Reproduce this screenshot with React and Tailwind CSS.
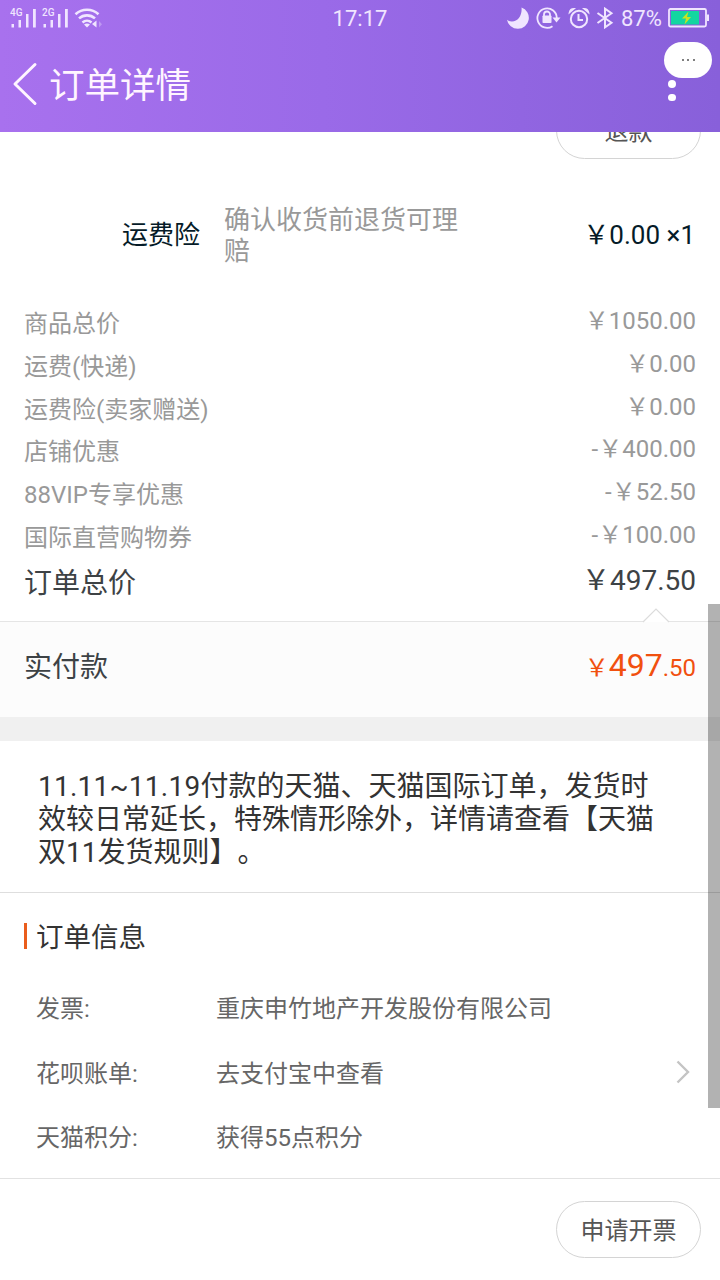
import React from 'react';

const PRICE_ROWS = [
    { label: '商品总价', value: '￥1050.00' },
    { label: '运费(快递)', value: '￥0.00' },
    { label: '运费险(卖家赠送)', value: '￥0.00' },
    { label: '店铺优惠', value: '-￥400.00' },
    { label: '88VIP专享优惠', value: '-￥52.50' },
    { label: '国际直营购物券', value: '-￥100.00' },
];

const INFO_ROWS = [
    { label: '发票:', value: '重庆申竹地产开发股份有限公司' },
    { label: '花呗账单:', value: '去支付宝中查看', link: true },
    { label: '天猫积分:', value: '获得55点积分' },
];

function Signal({ label }) {
    return (
        <svg width="27" height="22" viewBox="0 0 27 22" fill="currentColor">
            <text x="0" y="8.500" fontSize="10" fontWeight="500" fontFamily="Roboto, sans-serif">{label}</text>
            <rect x="1.500" y="17" width="2.500" height="3.500" />
            <rect x="8.500" y="13" width="2.500" height="7.500" />
            <rect x="16" y="7" width="2.500" height="13.500" />
            <rect x="23" y="2" width="2.800" height="18.500" />
        </svg>
    );
}

function StatusBar() {
    return (
        <div className="relative flex h-9 items-center text-[#f0e5ff]">
            <div className="flex w-[240px] items-center pl-[10px]">
                <Signal label="4G" />
                <div className="w-[5px]" />
                <Signal label="2G" />
                <svg className="ml-[5px]" width="29" height="22" viewBox="0 0 29 22" fill="none" stroke="currentColor" strokeWidth="2.600">
                    <path d="M1.500 7.200a17 17 0 0 1 23 0" />
                    <path d="M5 11.400a12 12 0 0 1 16 0" />
                    <path d="M8.500 15.400a7 7 0 0 1 9 0" />
                    <path d="M10 17.500a5 5 0 0 1 6 0L13 20.500z" fill="currentColor" stroke="none" />
                    <path d="m22.500 13.500v7l-4.500-3.500z" fill="currentColor" stroke="none" />
                    <path d="m25 14 3 3.200-3 3.200z" fill="currentColor" stroke="none" opacity=".35" />
                </svg>
            </div>
            <div className="w-[240px] pt-[2px] text-center text-[22px] leading-9 font-normal">17:17</div>
            <div className="flex w-[240px] items-center pl-[27px]">
                <svg width="22" height="22" viewBox="0 0 22 22" fill="currentColor">
                    <path d="M14.500 0.500A11 11 0 1 1 0 12.800a8 8 0 0 0 5 1.700c6.200 0 10.400-6.800 9.500-14z" />
                </svg>
                <svg className="ml-[7px]" width="25" height="22" viewBox="0 0 25 22" fill="none" stroke="currentColor" strokeWidth="1.800">
                    <path d="M16.500 19.200A9.700 9.700 0 1 1 20.800 11" />
                    <path d="M16.500 10.500h8l-4 5z" fill="currentColor" stroke="none" />
                    <path d="M8 9V7.500a3 3 0 0 1 6 0V9" />
                    <rect x="6.500" y="8.500" width="9" height="7.500" rx=".8" fill="currentColor" stroke="none" />
                </svg>
                <svg className="ml-[7px]" width="22" height="22" viewBox="0 0 22 22" fill="none" stroke="currentColor" strokeWidth="2">
                    <circle cx="11" cy="12" r="8.200" />
                    <path d="M10.500 7v6H15" />
                    <path d="M1.500 5.500A4.500 4.500 0 0 1 6 1.800zM20.500 5.500A4.500 4.500 0 0 0 16 1.800z" fill="currentColor" strokeWidth="1.500" />
                </svg>
                <svg className="ml-[6px]" width="18" height="22" viewBox="0 0 18 22" fill="none" stroke="currentColor" strokeWidth="2">
                    <path d="m1.500 6 14 9.700L9 20.300V1.700l6.500 4.600-14 9.700" />
                </svg>
                <span className="ml-[7px] w-[42px] pt-[2px] text-[22px] leading-9 font-normal">87%</span>
                <svg className="mb-[1px] ml-[5px]" width="41" height="20" viewBox="0 0 41 20">
                    <rect x="1" y="1" width="37" height="17.500" rx="1.500" fill="none" stroke="currentColor" strokeWidth="1.800" />
                    <rect x="3" y="3" width="28" height="13.500" fill="#13d6a0" />
                    <path d="M39 6.500h2v6.500h-2z" fill="currentColor" />
                    <path d="m20.500 3.500-6.500 7h4l-1.500 6 6.500-7.500h-4z" fill="#c8e320" />
                </svg>
            </div>
        </div>
    );
}

function Header() {
    return (
        <header className="relative z-10 h-[132px] bg-linear-to-r from-[#a871ee] from-0% via-[#9a6ae8] via-45% to-[#8860da]">
            <StatusBar />
            <div className="flex h-24 items-center pl-3 text-[#fff5ff]">
                <svg width="26" height="44" viewBox="0 0 26 44" fill="none" stroke="currentColor" strokeWidth="3" strokeLinecap="round" strokeLinejoin="round">
                    <path d="M23 2.500 3 22l20 19.500" />
                </svg>
                <h1 className="ml-[11px] pt-[5px] text-[35.500px] leading-none font-normal">订单详情</h1>
            </div>
            <div className="absolute top-[80px] left-[668px] flex flex-col gap-[6px]">
                <span className="h-[7.500px] w-[7.500px] rounded-full bg-white" />
                <span className="h-[7.500px] w-[7.500px] rounded-full bg-white" />
            </div>
            <div className="absolute top-[42px] right-2 flex h-9 w-12 items-center justify-center gap-[3.500px] rounded-[18px] bg-white">
                <span className="h-[2px] w-[2px] rounded-full bg-[#555]" />
                <span className="h-[2px] w-[2px] rounded-full bg-[#555]" />
                <span className="h-[2px] w-[2px] rounded-full bg-[#555]" />
            </div>
        </header>
    );
}

function PillButton({ children }) {
    return (
        <button className="h-[57px] w-[145px] rounded-full border border-[#d4d4d4] bg-white pt-[2px] text-[24px] leading-none text-[#555]">
            {children}
        </button>
    );
}

export default function App() {
    return (
        <div className="relative h-[1280px] w-[720px] overflow-hidden bg-white font-['Roboto','Noto_Sans_CJK_SC',sans-serif] [text-spacing-trim:space-all]">
            <Header />

            <div className="-mt-[30px] flex justify-end pr-[19px]">
                <PillButton>退款</PillButton>
            </div>

            <section className="mt-[44px] flex h-16 items-center pr-[25px] pl-[122px] text-[26px] text-[#051b28]">
                <span className="w-[102px]">运费险</span>
                <p className="w-[240px] pt-[2px] leading-[31px] text-[#999]">确认收货前退货可理赔</p>
                <span className="ml-auto">￥0.00 ×1</span>
            </section>

            <section className="h-[355px] border-b border-[#e5e5e5] px-6 pt-[34px]">
                {PRICE_ROWS.map((row) => (
                    <div key={row.label} className="flex h-[42.700px] items-center justify-between text-[24px] leading-none text-[#999]">
                        <span className="pt-[4px]">{row.label}</span>
                        <span className="pb-[2px]">{row.value}</span>
                    </div>
                ))}
                <div className="flex h-12 items-center justify-between text-[28px] leading-none text-[#3d4245]">
                    <span className="pt-[5px]">订单总价</span>
                    <span className="pb-[1px]">￥497.50</span>
                </div>
            </section>

            <section className="relative flex h-[95px] items-center justify-between bg-[#fcfcfc] px-6 pb-[4px] text-[28px] text-[#3d4245]">
                <svg className="absolute -top-[14px] left-[642px]" width="28" height="15" viewBox="0 0 28 15">
                    <path d="M1 14 14 1l13 13" fill="#fff" stroke="#dcdcdc" strokeWidth="1.200" />
                </svg>
                <span>实付款</span>
                <span className="pb-[6px] text-[#f1500f]">
                    <span className="text-[24px]">￥</span>
                    <span className="text-[32px]">497</span>
                    <span className="text-[24px]">.50</span>
                </span>
            </section>

            <div className="h-6 bg-[#f0f0f0]" />

            <section className="h-[152px] border-b border-[#dedede] pt-[29px] pl-[38px]">
                <p className="w-[640px] text-[28px] leading-[33px] text-[#333]">
                    <span className="tracking-[0.250px]">11.11~11.19</span>付款的天猫、天猫国际订单，发货时
                    <br />
                    效较日常延长，特殊情形除外，详情请查看【天猫
                    <br />
                    双11发货规则】。
                </p>
            </section>

            <section className="h-[286px] border-b border-[#e2e2e2] pt-[19px] pl-6">
                <div className="flex h-12 items-center">
                    <span className="h-[26px] w-[3px] bg-[#ea5d1c]" />
                    <h2 className="ml-[9px] pt-[3px] text-[27.500px] leading-none font-normal text-[#333]">订单信息</h2>
                </div>
                <div className="mt-[16px] pl-3">
                    {INFO_ROWS.map((row) => (
                        <div key={row.label} className="flex h-[64.500px] items-center pr-[30px] text-[24px] text-[#666]">
                            <span className="w-[180px] pt-[2px]">{row.label}</span>
                            <span className="pt-[2px]">{row.value}</span>
                            {row.link && (
                                <svg className="mb-[2px] ml-auto" width="14" height="24" viewBox="0 0 14 24" fill="none" stroke="#c4c4c4" strokeWidth="2.400">
                                    <path d="m1.500 1.500 10.500 10.500L1.500 22.500" />
                                </svg>
                            )}
                        </div>
                    ))}
                </div>
            </section>

            <footer className="flex justify-end pt-[22px] pr-[19px]">
                <PillButton>申请开票</PillButton>
            </footer>

            {/* scroll thumb */}
            <div className="absolute top-[604px] right-0 h-[504px] w-3 bg-black/30" />
        </div>
    );
}
